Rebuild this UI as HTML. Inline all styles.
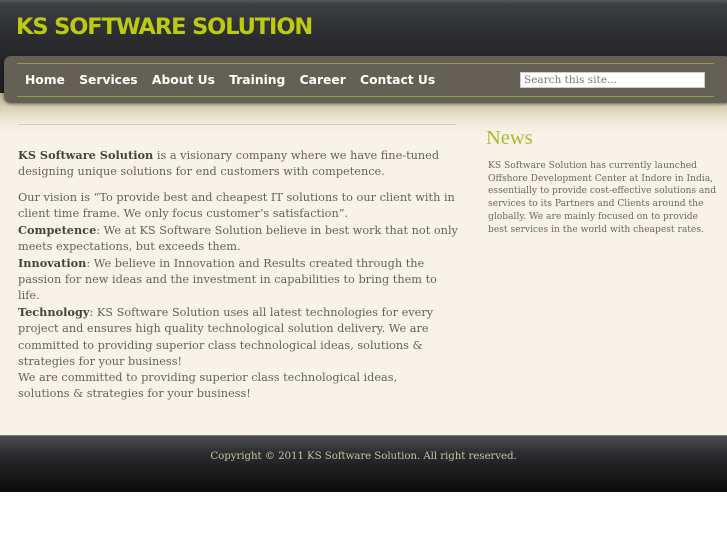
<!DOCTYPE html>
<html><head><meta charset="utf-8"><style>
*{margin:0;padding:0;box-sizing:border-box}
body{width:727px;height:545px;background:#fff;position:relative;overflow:hidden;font-family:"DejaVu Serif",serif}
#hdr{position:absolute;left:0;top:0;width:727px;height:93px;background:linear-gradient(#55575a 0,#3c3e42 4px,#2a2b2e 40px,#1c1d1f 93px)}
#title{position:absolute;left:16px;top:14px;font:bold 22.5px "DejaVu Sans",sans-serif;color:#bccb12;letter-spacing:-1.1px}
#band{position:absolute;left:0;top:93px;width:727px;height:342px;background:linear-gradient(#b8ab85 0,#d8cfb4 14px,#f0ebdc 30px,#f7f3e8 40px,#f7f3e8 100%)}
#nav{position:absolute;left:4px;top:56px;width:727px;height:47px;background:#646055;border-radius:7px;box-shadow:0 1px 3px rgba(0,0,0,.5)}
#nav .l1,#nav .l2{position:absolute;left:13px;width:697px;height:1px;background:#959a45}
#nav .l1{top:7px}#nav .l2{top:40px}
#menu{position:absolute;left:21px;top:17px;font:bold 12.3px "DejaVu Sans",sans-serif;color:#fff;white-space:nowrap}
#menu span{margin-right:10px}
#search{position:absolute;left:516px;top:16px;width:185px;height:16px;background:#fff;border:1px solid #ccc;font:10.5px "DejaVu Serif",serif;color:#777;padding:1px 3px;line-height:13px}
#rule{position:absolute;left:18px;top:124px;width:438px;height:1px;background:#d4ccb4}
#main{position:absolute;left:18px;top:147px;width:445px;font-size:11.3px;line-height:16.05px;color:#66625a;white-space:nowrap}
#main b{color:#47443d}
#news{position:absolute;left:486px;top:127px;color:#a9ba24;font-family:"Liberation Serif",serif;font-size:20.5px}
#side{position:absolute;left:488px;top:160px;font-size:9.15px;line-height:12.7px;color:#6d6960;white-space:nowrap}
#ftr{position:absolute;left:0;top:435px;width:727px;height:57px;background:linear-gradient(#4c4d50 0,#2c2d30 30%,#0a0a0a 100%);border-top:1px solid #7a7a72}
#ftr div{text-align:center;margin-top:14px;font-size:10.3px;letter-spacing:-0.1px;color:#c8c0a4}
</style></head><body>
<div id="hdr"><div id="title">KS SOFTWARE SOLUTION</div></div>
<div id="band"></div>
<div id="nav"><div class="l1"></div><div class="l2"></div>
<div id="menu"><span>Home</span> <span>Services</span> <span>About Us</span> <span>Training</span> <span>Career</span> <span>Contact Us</span></div>
<div id="search">Search this site...</div></div>
<div id="rule"></div>
<div id="main"><b>KS Software Solution</b> is a visionary company where we have fine-tuned<br>designing unique solutions for end customers with competence.<br><div style="height:10px"></div>Our vision is “To provide best and cheapest IT solutions to our client with in<br>client time frame. We only focus customer’s satisfaction”.<br><b>Competence</b>: We at KS Software Solution believe in best work that not only<br>meets expectations, but exceeds them.<br><b>Innovation</b>: We believe in Innovation and Results created through the<br>passion for new ideas and the investment in capabilities to bring them to<br>life.<br><b>Technology</b>: KS Software Solution uses all latest technologies for every<br>project and ensures high quality technological solution delivery. We are<br>committed to providing superior class technological ideas, solutions &amp;<br>strategies for your business!<br>We are committed to providing superior class technological ideas,<br>solutions &amp; strategies for your business!</div>
<div id="news">News</div>
<div id="side">KS Software Solution has currently launched<br>Offshore Development Center at Indore in India,<br>essentially to provide cost-effective solutions and<br>services to its Partners and Clients around the<br>globally. We are mainly focused on to provide<br>best services in the world with cheapest rates.</div>
<div id="ftr"><div>Copyright © 2011 KS Software Solution. All right reserved.</div></div>
</body></html>
